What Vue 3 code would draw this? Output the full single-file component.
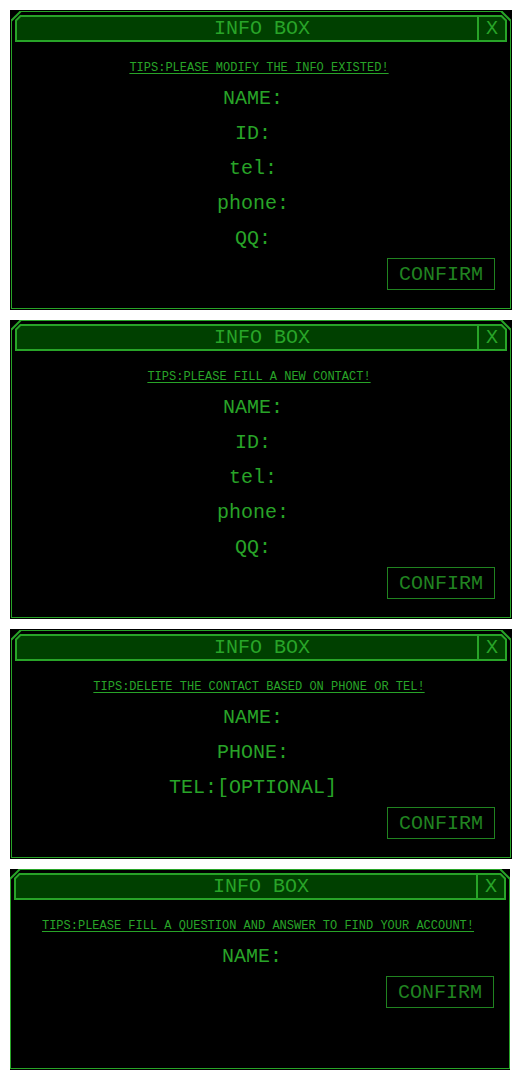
<script setup>
const panels = [
  {
    id: 'modify',
    tip: 'TIPS:PLEASE MODIFY THE INFO EXISTED!',
    fields: ['NAME:', 'ID:', 'tel:', 'phone:', 'QQ:'],
    mods: [],
  },
  {
    id: 'create',
    tip: 'TIPS:PLEASE FILL A NEW CONTACT!',
    fields: ['NAME:', 'ID:', 'tel:', 'phone:', 'QQ:'],
    mods: ['flush-top'],
  },
  {
    id: 'delete',
    tip: 'TIPS:DELETE THE CONTACT BASED ON PHONE OR TEL!',
    fields: ['NAME:', 'PHONE:', 'TEL:[OPTIONAL]'],
    mods: [],
  },
  {
    id: 'find',
    tip: 'TIPS:PLEASE FILL A QUESTION AND ANSWER TO FIND YOUR ACCOUNT!',
    fields: ['NAME:'],
    mods: ['flush-top', 'flush-sides', 'tall'],
  },
]
</script>

<template>
  <main class="stack">
    <section v-for="p in panels" :key="p.id" class="panel" :class="p.mods">
      <form class="frame" @submit.prevent>
        <svg
          v-for="side in ['left', 'right']"
          :key="side"
          class="corner"
          :class="side"
          viewBox="0 0 14 14"
          aria-hidden="true"
        >
          <path d="M0 0H9L0 9ZM4 4H9.5L4 9.5Z" fill="#000" />
          <path d="M0 10L10 0" fill="none" stroke="#28a428" stroke-width="2" />
          <path d="M4.5 10L10 4.5" fill="none" stroke="#28a428" stroke-width="2" />
        </svg>
        <header class="bar">
          <h2 class="title">INFO BOX</h2>
          <button type="button" class="close">X</button>
        </header>
        <p class="tip">{{ p.tip }}</p>
        <div v-for="(f, i) in p.fields" :key="f" class="row">
          <label class="label" :for="p.id + i">{{ f }}</label>
          <input :id="p.id + i" class="field" type="text" autocomplete="off" />
        </div>
        <button type="submit" class="confirm">CONFIRM</button>
      </form>
    </section>
  </main>
</template>

<style>
body {
  margin: 0;
  background: #fff;
}
</style>

<style scoped>
.stack {
  display: flex;
  flex-direction: column;
  gap: 10px;
  padding: 10px;
  color: #28a428;
  font-family: "Courier New", "Liberation Mono", monospace;
  font-size: 20px;
}
.panel {
  display: flex;
  padding: 1px;
  background: #000;
}
.flush-top {
  padding-top: 0;
}
.flush-sides {
  padding-left: 0;
  padding-right: 0;
  margin-right: 2px;
}
.tall .frame {
  padding-bottom: 60px;
}
.frame {
  position: relative;
  flex: 1;
  display: flex;
  flex-direction: column;
  min-width: 0;
  padding: 3px 3px 18px;
  border: 1px solid #28a428;
}
.corner {
  position: absolute;
  top: -1px;
  width: 14px;
  height: 14px;
}
.left {
  left: -1px;
}
.right {
  right: -1px;
  transform: scaleX(-1);
}
.bar {
  display: flex;
  border: 2px solid #28a428;
  background: #004000;
}
.title {
  flex: 1;
  margin: 0;
  padding-left: 30px;
  font-size: 20px;
  font-weight: 400;
  line-height: 23px;
  text-align: center;
}
.close {
  width: 28px;
  padding: 0;
  border: 0;
  border-left: 2px solid #28a428;
  background: none;
  color: inherit;
  font: inherit;
  line-height: 23px;
}
.tip {
  margin: 0;
  padding: 19px 4px 6px 0;
  font-size: 12px;
  line-height: 14px;
  text-align: center;
  text-decoration: underline 1px;
  text-underline-offset: 2px;
}
.row {
  display: grid;
  grid-template-columns: 1fr auto 1fr;
  padding-right: 16px;
  line-height: 35px;
}
.label {
  grid-column: 2;
}
.field {
  min-width: 0;
  padding: 0;
  border: 0;
  outline: 0;
  background: none;
  color: inherit;
  font: inherit;
}
.confirm {
  align-self: flex-end;
  width: 108px;
  height: 32px;
  margin: 2px 12px 0 0;
  padding: 0;
  border: 1px solid #208320;
  background: #000;
  color: #208320;
  font: inherit;
}
</style>
